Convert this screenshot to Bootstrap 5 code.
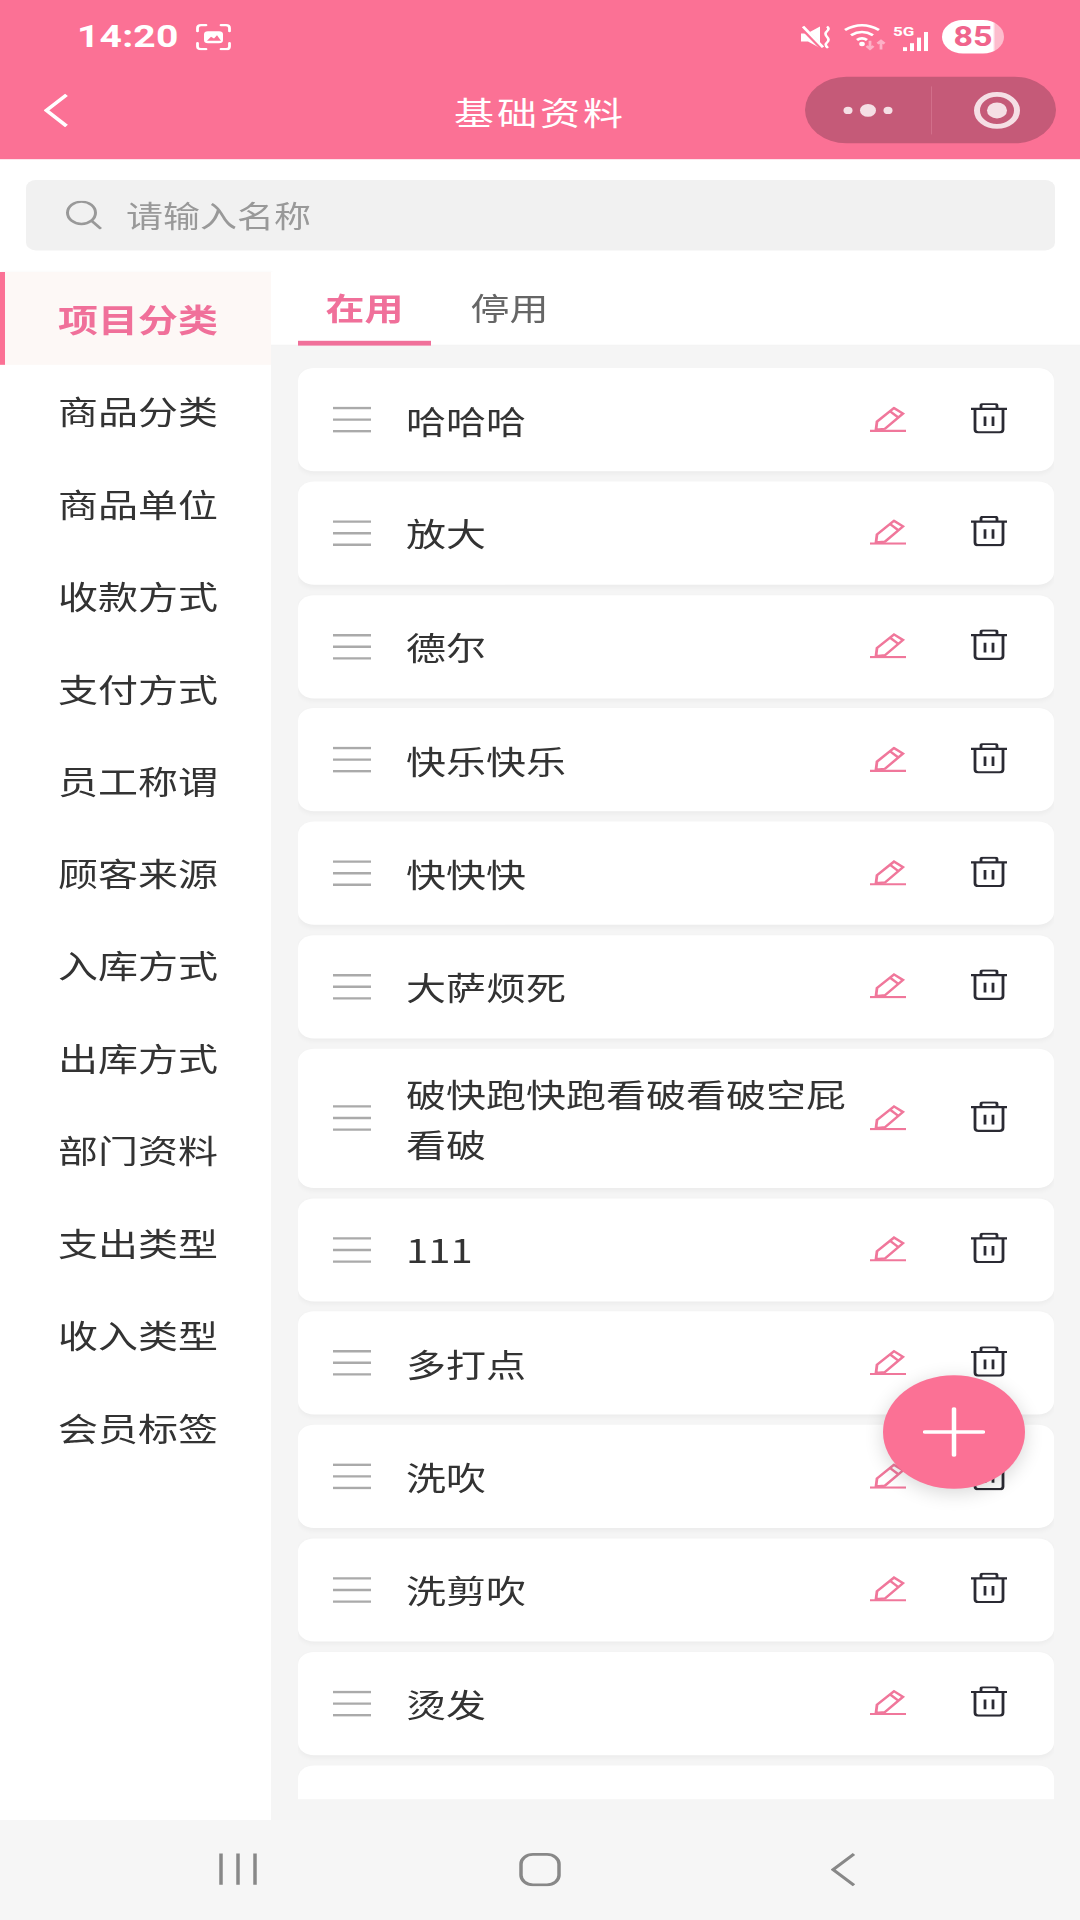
<!DOCTYPE html>
<html lang="zh-CN">
<head>
  <meta charset="UTF-8">
  <meta name="viewport" content="width=device-width, initial-scale=1">
  <title>基础资料</title>
  <link href="https://cdn.jsdelivr.net/npm/bootstrap@5.3.3/dist/css/bootstrap.min.css" rel="stylesheet">
  <style>
    html, body { height: 1920px; overflow: hidden; background: #fff; }
    body { font-family: "Noto Sans CJK SC", "Liberation Sans", sans-serif; color: #333; }
    /* the shot is a 1080x2400 screen squeezed to 1920 high */
    .phone { width: 1080px; height: 2400px; margin-bottom: -480px; transform: scaleY(.8); transform-origin: 0 0; }
    .top-bar { height: 199px; background: #fb7195; color: #fff; }
    .status-row { height: 96px; padding: 0 76px 4px 77px; }
    .clock { font: 700 39px Roboto, sans-serif; letter-spacing: .2px; margin-right: 17px; }
    .wifi-icon { margin-left: 13px; }
    .five-g { font: 700 17px/1 Roboto, sans-serif; position: absolute; left: 0; top: 1px; }
    .signal { width: 36px; height: 33px; margin: 0 13px 0 7px; }
    .signal-bars { right: 0; bottom: -1px; }
    .battery { width: 62px; height: 42px; border-radius: 21px; color: #f0648c; font: 700 34px/42px Roboto, sans-serif; text-align: center; background: linear-gradient(90deg, #fff 0 82%, #fdbccd 86%); }
    .title-row { height: 83px; padding: 0 24px 0 44px; }
    .page-title { left: 0; right: 0; top: 2px; line-height: 83px; font-size: 40px; letter-spacing: 3px; text-align: center; }
    .capsule { width: 251px; height: 83px; border-radius: 42px; background: #c55a78; }
    .capsule-left { width: 126px; }
    .capsule-right { flex: 1; height: 60px; border-left: 1px solid #d16f8a; padding-left: 5px; }
    .search-box { margin: 26px 25px 27px 26px; height: 88px; border-radius: 10px; background: #f1f1f1; padding-left: 39px; gap: 24px; color: #999; font-size: 37px; }
    .body-area { height: 1935px; }
    .side-menu { width: 271px; box-shadow: 1px 0 3px rgba(0,0,0,.04); }
    .side-item { height: 115.5px; padding-left: 58px; font-size: 40px; color: #333; }
    .side-item.on { padding-left: 53px; border-left: 5px solid #fb7195; background: #fdf8f6; color: #f0709a; font-weight: 700; }
    .content-pane { background: #f5f5f5; height: 100%; }
    .tab-row { height: 92px; background: #fff; padding-left: 27px; gap: 12px; border-bottom: 1px solid #eee; }
    .tab-link { width: 133px; height: 92px; line-height: 86px; text-align: center; font-size: 39px; color: #666; }
    .tab-link.on { color: #f0709a; font-weight: 700; border-bottom: 6px solid #f0709a; }
    .row-list { margin: 28px 26px 0 27px; height: 1789px; gap: 12.8px; }
    .item-card { min-height: 129px; flex-shrink: 0; padding: 25px 33px 25px 35px; background: #fff; border-radius: 16px; box-shadow: 0 3px 6px rgba(0,0,0,.04); }
    .drag-lines { width: 38px; flex-shrink: 0; margin-right: 35px; }
    .item-name { width: 442px; font-size: 40px; line-height: 62px; color: #333; }
    .pencil { margin-left: 22px; margin-right: 65px; flex-shrink: 0; position: relative; top: -1px; }
    .bin-icon { flex-shrink: 0; position: relative; top: -2px; }
    .add-btn { left: 883px; top: 1719px; width: 142px; height: 142px; border-radius: 50%; background: #fb7195; box-shadow: 0 5px 22px rgba(0,0,0,.16); }
    .soft-keys { height: 125px; background: #f6f6f6; }
    .soft-keys svg { position: absolute; top: 41px; }
    .key-recent { left: 219px; }
    .key-home { left: 519px; }
    .key-back { left: 831px; }
  </style>
</head>
<body>
  <div class="phone position-relative">
    <header class="top-bar">
      <div class="status-row d-flex align-items-center">
        <span class="clock">14:20</span>
        <svg width="35" height="33" viewBox="0 0 35 33" fill="none" stroke="#fff" stroke-width="2.8" stroke-linecap="round">
          <path d="M1.500 9V5q0-3.500 3.500-3.500h5M25 1.500h5q3.500 0 3.500 3.500v4M33.500 24v4q0 3.500-3.500 3.500h-5M10 31.500H5q-3.500 0-3.500-3.500v-4"/>
          <rect x="8" y="9" width="19" height="15" rx="4" fill="#fff" stroke="none"/>
          <path d="M11 21l4-5 3 2 3-4 4 7z" fill="#fb7195" stroke="none"/>
        </svg>
        <div class="flex-grow-1"></div>
        <svg width="31" height="29" viewBox="0 0 31 29" fill="none" stroke="#fff">
          <path d="M1 10h6l13-9v27L8 20H1z" fill="#fff" stroke="none"/>
          <path d="M1 1l21 27" stroke="#fb7195" stroke-width="5"/>
          <path d="M3 1l20 26" stroke-width="3"/>
          <path d="M27 1q3 3 0 6t0 7 0 7 1 7" stroke-width="2.600"/>
        </svg>
        <svg class="wifi-icon" width="42" height="36" viewBox="0 0 42 36" fill="none" stroke="#fff" stroke-width="3.200">
          <path d="M1 9.500q17-12 34 0M7 16q11-8 22 0M13 22q5-4 10 0"/>
          <circle cx="18" cy="27" r="2.800" fill="#fff" stroke="none"/>
          <path d="M26 23v10m-3.500-3.500l3.500 3.500 3.500-3.500M37 34V23m-3.500 3.500l3.500-3.500 3.500 3.500" stroke="#fdb0c6" stroke-width="2.800"/>
        </svg>
        <div class="signal position-relative">
          <span class="five-g">5G</span>
          <svg class="signal-bars position-absolute" width="26" height="24" viewBox="0 0 26 24" fill="#fff">
            <rect x="0" y="19" width="4" height="5"/><rect x="7" y="14" width="4" height="10"/><rect x="14" y="7" width="4" height="17"/><rect x="21" y="0" width="4" height="24"/>
          </svg>
        </div>
        <div class="battery">85</div>
      </div>
      <div class="title-row d-flex align-items-center justify-content-between position-relative">
        <div class="page-title position-absolute">基础资料</div>
        <svg class="position-relative" width="24" height="42" viewBox="0 0 24 42" fill="none" stroke="#fff" stroke-width="4"><path d="M22.500 1.500L2.500 21l20 19.500"/></svg>
        <div class="capsule d-flex align-items-center position-relative">
          <div class="capsule-left d-flex justify-content-center">
            <svg width="50" height="18" viewBox="0 0 50 18" fill="#f5dfe5"><circle cx="5" cy="9" r="4.500"/><circle cx="25" cy="9" r="8"/><circle cx="45" cy="9" r="4.500"/></svg>
          </div>
          <div class="capsule-right d-flex align-items-center justify-content-center">
            <svg width="48" height="48" viewBox="0 0 48 48" fill="none" stroke="#f5dfe5" stroke-width="6"><circle cx="24" cy="24" r="20"/><circle cx="24" cy="24" r="10" fill="#f5dfe5" stroke="none"/></svg>
          </div>
        </div>
      </div>
    </header>

    <div class="search-box d-flex align-items-center">
      <svg width="37" height="36" viewBox="0 0 37 36" fill="none" stroke="#999" stroke-width="3"><circle cx="16.500" cy="15" r="14"/><path d="M27 25.500l9 9.500"/></svg>
      <span>请输入名称</span>
    </div>

    <div class="body-area d-flex">
      <nav class="side-menu" id="sideMenu"></nav>
      <main class="content-pane flex-grow-1">
        <div class="tab-row d-flex">
          <div class="tab-link on">在用</div>
          <div class="tab-link">停用</div>
        </div>
        <div class="row-list d-flex flex-column overflow-hidden" id="rowList"></div>
      </main>
    </div>

    <div class="soft-keys position-relative">
      <svg class="key-recent" width="38" height="41" viewBox="0 0 38 41" fill="none" stroke="#888" stroke-width="3.500"><path d="M2 1v39M19 1v39M36 1v39"/></svg>
      <svg class="key-home" width="42" height="42" viewBox="0 0 42 42" fill="none" stroke="#888" stroke-width="3.500"><rect x="2" y="2" width="38" height="38" rx="12"/></svg>
      <svg class="key-back" width="25" height="42" viewBox="0 0 25 42" fill="none" stroke="#888" stroke-width="3.500"><path d="M23 1.500L2 21l21 19.500"/></svg>
    </div>

    <button class="add-btn position-absolute border-0 p-0 d-flex align-items-center justify-content-center" aria-label="add">
      <svg width="62" height="62" viewBox="0 0 62 62" stroke="#fff" stroke-width="4.500" stroke-linecap="round"><path d="M31 2v58M2 31h58"/></svg>
    </button>
  </div>

  <script>
    const menus = ['项目分类', '商品分类', '商品单位', '收款方式', '支付方式', '员工称谓', '顾客来源', '入库方式', '出库方式', '部门资料', '支出类型', '收入类型', '会员标签'];
    const rows = ['哈哈哈', '放大', '德尔', '快乐快乐', '快快快', '大萨烦死', '破快跑快跑看破看破空屁看破', '111', '多打点', '洗吹', '洗剪吹', '烫发', ''];

    const dragIcon = `<svg class="drag-lines" width="38" height="33" viewBox="0 0 38 33" stroke="#aaa" stroke-width="3"><path d="M0 2h38M0 16.500h38M0 31h38"/></svg>`;
    const editIcon = `<svg class="pencil" width="36" height="32" viewBox="0 0 36 32" fill="none" stroke="#f0779b" stroke-width="2.800"><path d="M6 29l1-10L24 2l9 7-18 19z"/><path d="M20 6l8.500 8"/><path d="M0 30.500h36" stroke-width="2.800"/></svg>`;
    const trashIcon = `<svg class="bin-icon" width="36" height="38" viewBox="0 0 36 38" fill="none" stroke="#2a2a33" stroke-width="2.800"><path d="M0 7h36M10 7V3q0-2 2-2h12q2 0 2 2v4"/><path d="M4 7v26q0 3.500 3.500 3.500h21q3.500 0 3.500-3.500V7"/><path d="M14 16.500v12M22 16.500v12"/></svg>`;

    document.getElementById('sideMenu').innerHTML = menus.map((name, i) =>
      `<div class="side-item d-flex align-items-center ${i === 0 ? 'on' : ''}">${name}</div>`).join('');

    document.getElementById('rowList').innerHTML = rows.map(name => `
      <div class="item-card d-flex align-items-center">
        ${dragIcon}
        <div class="item-name">${name}</div>
        ${editIcon}
        ${trashIcon}
      </div>`).join('');
  </script>
  <script src="https://cdn.jsdelivr.net/npm/bootstrap@5.3.3/dist/js/bootstrap.bundle.min.js"></script>
</body>
</html>
